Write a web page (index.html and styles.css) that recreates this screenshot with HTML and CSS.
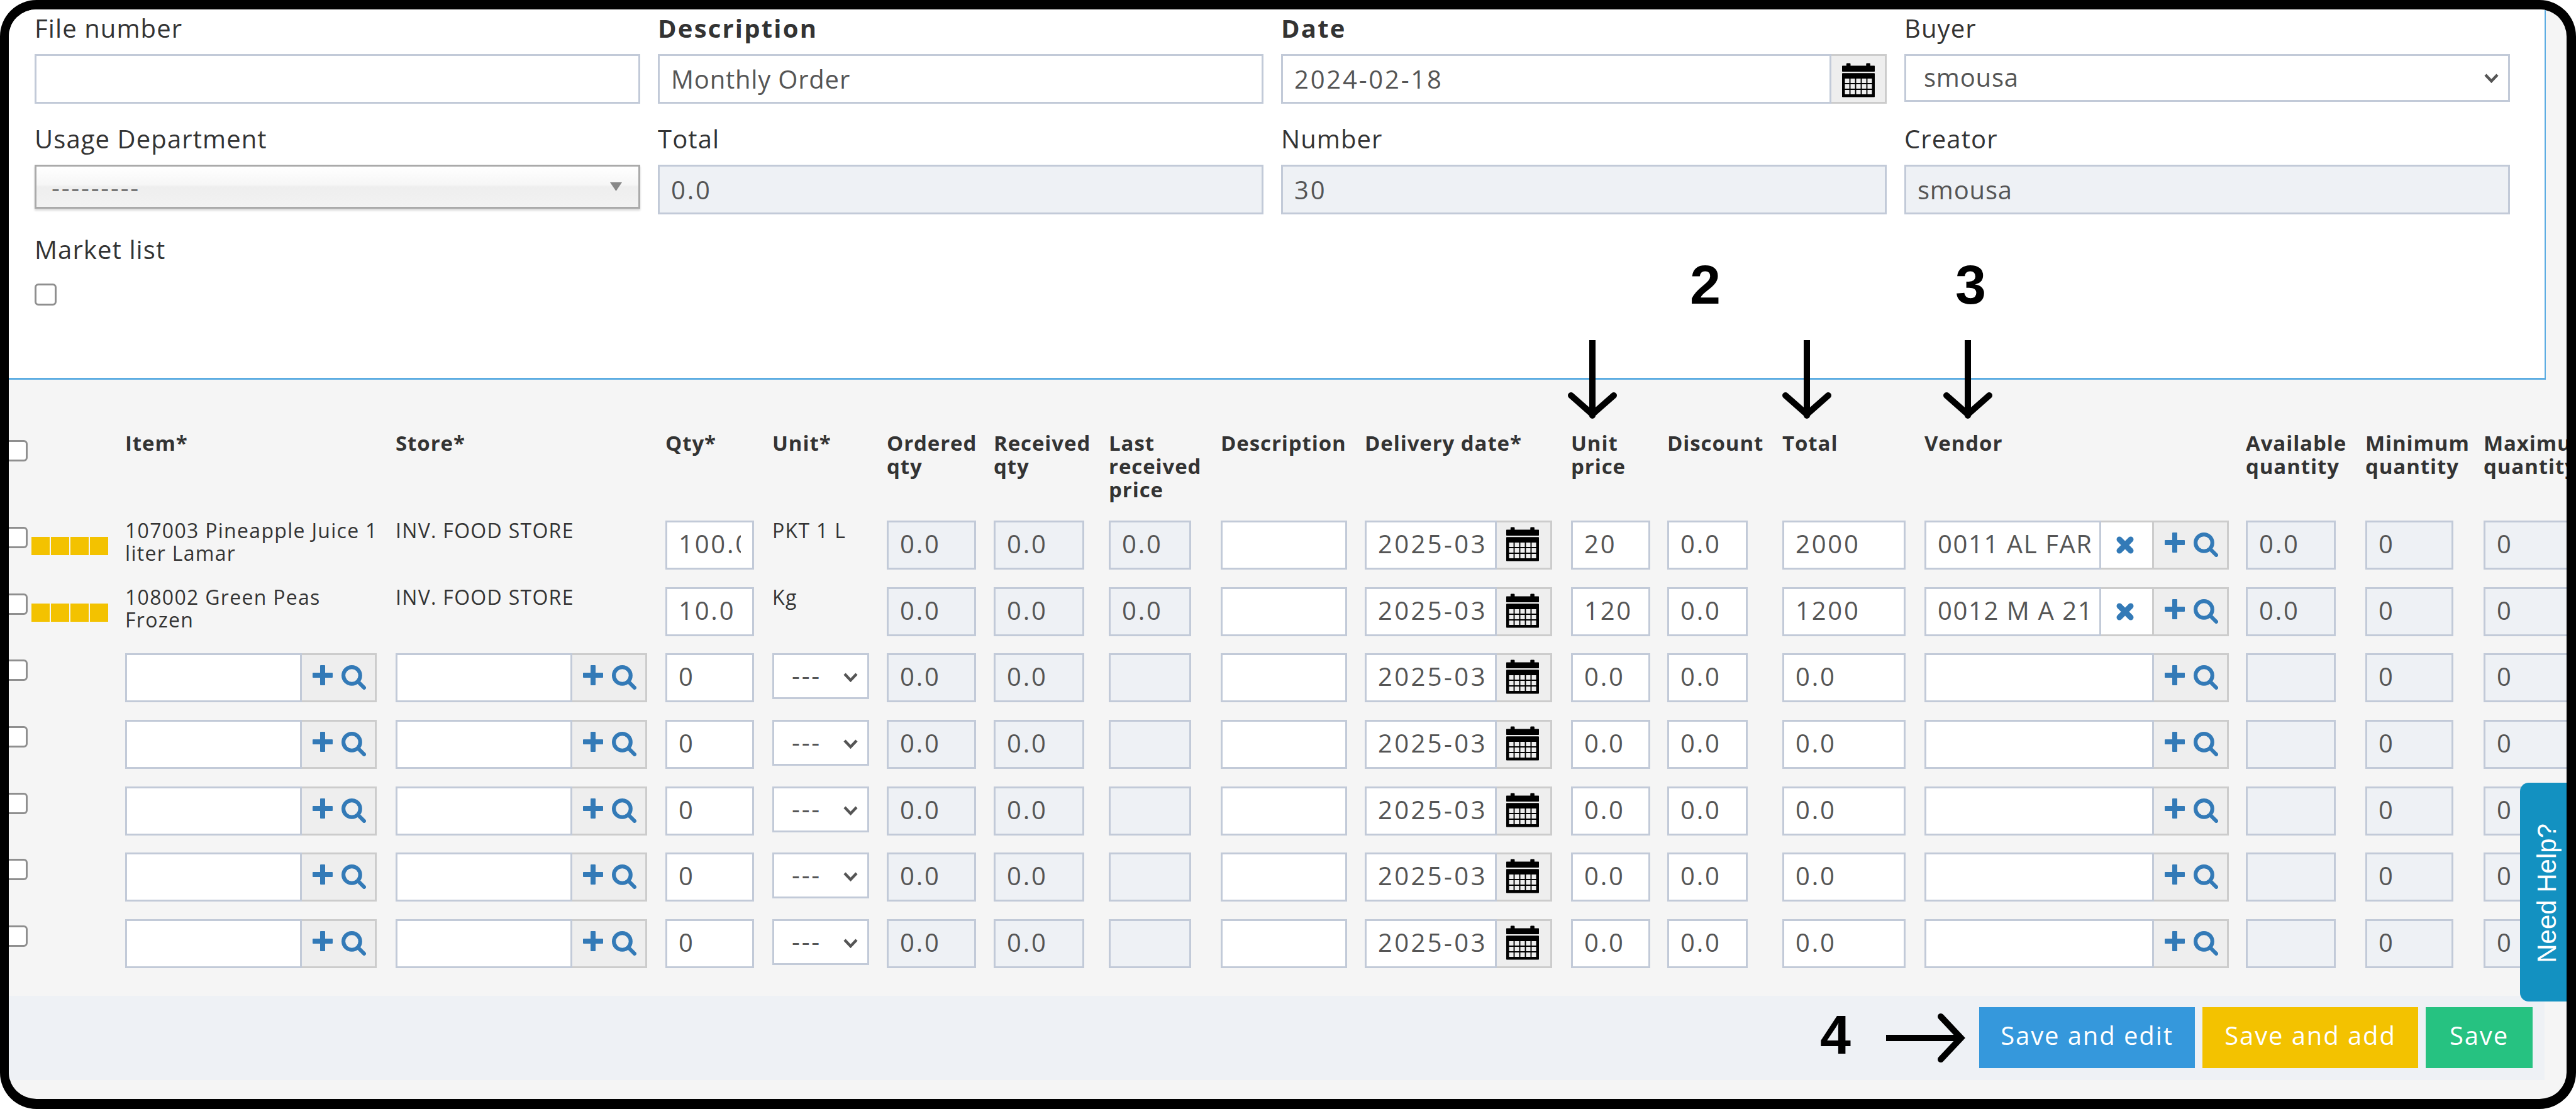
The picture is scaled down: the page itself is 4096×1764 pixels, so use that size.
FILE: index.html
```html
<!DOCTYPE html>
<html lang="en">
<head>
    <meta charset="UTF-8">
    <title>Purchase order</title>
    <link rel="stylesheet" href="styles.css">
</head>
<body>
    <svg class="defs">
        <symbol id="i-plus" viewBox="0 0 32 32"><path d="M12 1q0-1 1-1h6q1 0 1 1v11h11q1 0 1 1v6q0 1-1 1H20v11q0 1-1 1h-6q-1 0-1-1V20H1q-1 0-1-1v-6q0-1 1-1h11z"/></symbol>
        <symbol id="i-search" viewBox="0 0 38 38"><circle cx="16" cy="16" r="13" fill="none" stroke="currentColor" stroke-width="6"/><path d="M26 26l9 9" fill="none" stroke="currentColor" stroke-width="6" stroke-linecap="round"/></symbol>
        <symbol id="i-x" viewBox="0 0 28 28"><path d="M5 5l18 18M23 5L5 23" fill="none" stroke="currentColor" stroke-width="9" stroke-linecap="round"/></symbol>
        <symbol id="i-cal" viewBox="0 0 220 229">
            <rect x="29" y="0" width="28" height="30" rx="6" fill="#000"/>
            <rect x="162" y="0" width="28" height="30" rx="6" fill="#000"/>
            <rect x="0" y="17" width="220" height="40" rx="3" fill="#000"/>
            <rect x="0" y="67" width="220" height="162" rx="4" fill="#000"/>
            <path fill="#eee" d="M19 104h30v30H19zM57 104h30v30H57zM95 104h30v30H95zM133 104h30v30h-30zM171 104h30v30h-30zM19 142h30v30H19zM57 142h30v30H57zM95 142h30v30H95zM133 142h30v30h-30zM171 142h30v30h-30zM19 180h30v30H19zM57 180h30v30H57zM95 180h30v30H95zM133 180h30v30h-30zM171 180h30v30h-30z"/>
        </symbol>
        <symbol id="i-down" viewBox="0 0 90 135"><path d="M45 0V120M11 88L45 118L79 88" fill="none" stroke="#000" stroke-width="10" stroke-linecap="round"/></symbol>
    </svg>

    <div class="screen">
        <div class="panel">
            <div class="fields">
                <div class="field">
                    <label>File number</label>
                    <input class="box" type="text">
                </div>
                <div class="field">
                    <label class="strong">Description</label>
                    <input class="box alpha" type="text" value="Monthly Order">
                </div>
                <div class="field">
                    <label class="strong">Date</label>
                    <div class="group">
                        <input class="box" type="text" value="2024-02-18">
                        <span class="addon cal"><svg class="i-cal"><use href="#i-cal"/></svg></span>
                    </div>
                </div>
                <div class="field">
                    <label>Buyer</label>
                    <select class="pick buyer alpha"><option>smousa</option></select>
                </div>
                <div class="field">
                    <label>Usage Department</label>
                    <select class="usage"><option>---------</option></select>
                </div>
                <div class="field">
                    <label>Total</label>
                    <input class="box ro" type="text" value="0.0" readonly>
                </div>
                <div class="field">
                    <label>Number</label>
                    <input class="box ro" type="text" value="30" readonly>
                </div>
                <div class="field">
                    <label>Creator</label>
                    <input class="box ro alpha" type="text" value="smousa" readonly>
                </div>
                <div class="field">
                    <label>Market list</label>
                    <input class="tick market" type="checkbox">
                </div>
            </div>
        </div>

        <div class="head line">
            <input class="tick" type="checkbox">
            <span></span>
            <span>Item*</span>
            <span>Store*</span>
            <span>Qty*</span>
            <span>Unit*</span>
            <span>Ordered<br>qty</span>
            <span>Received<br>qty</span>
            <span>Last<br>received<br>price</span>
            <span>Description</span>
            <span>Delivery date*</span>
            <span>Unit<br>price</span>
            <span>Discount</span>
            <span>Total</span>
            <span>Vendor</span>
            <span>Available<br>quantity</span>
            <span>Minimum<br>quantity</span>
            <span>Maximum<br>quantity</span>
        </div>

        <div class="lines">
            <div class="line">
                <input class="tick" type="checkbox">
                <div class="bars"><i></i><i></i><i></i><i></i></div>
                <div class="txt">107003 Pineapple Juice 1 liter Lamar</div>
                <div class="txt">INV. FOOD STORE</div>
                <input class="box w-qty" type="text" value="100.0">
                <div class="txt">PKT 1 L</div>
                <input class="box ro w-ord" type="text" value="0.0" readonly>
                <input class="box ro w-rec" type="text" value="0.0" readonly>
                <input class="box ro w-last" type="text" value="0.0" readonly>
                <input class="box w-desc" type="text">
                <div class="group w-date"><input class="box" type="text" value="2025-03-10"><span class="addon cal"><svg class="i-cal"><use href="#i-cal"/></svg></span></div>
                <input class="box w-price" type="text" value="20">
                <input class="box w-disc" type="text" value="0.0">
                <input class="box w-total" type="text" value="2000">
                <div class="group w-vendor"><input class="box" type="text" value="0011 AL FARES"><span class="clear"><svg class="i-x"><use href="#i-x"/></svg></span><span class="addon find"><svg class="i-plus"><use href="#i-plus"/></svg><svg class="i-search"><use href="#i-search"/></svg></span></div>
                <input class="box ro w-avail" type="text" value="0.0" readonly>
                <input class="box ro w-min" type="text" value="0" readonly>
                <input class="box ro w-max" type="text" value="0" readonly>
            </div>
            <div class="line">
                <input class="tick" type="checkbox">
                <div class="bars"><i></i><i></i><i></i><i></i></div>
                <div class="txt">108002 Green Peas Frozen</div>
                <div class="txt">INV. FOOD STORE</div>
                <input class="box w-qty" type="text" value="10.0">
                <div class="txt">Kg</div>
                <input class="box ro w-ord" type="text" value="0.0" readonly>
                <input class="box ro w-rec" type="text" value="0.0" readonly>
                <input class="box ro w-last" type="text" value="0.0" readonly>
                <input class="box w-desc" type="text">
                <div class="group w-date"><input class="box" type="text" value="2025-03-10"><span class="addon cal"><svg class="i-cal"><use href="#i-cal"/></svg></span></div>
                <input class="box w-price" type="text" value="120">
                <input class="box w-disc" type="text" value="0.0">
                <input class="box w-total" type="text" value="1200">
                <div class="group w-vendor"><input class="box" type="text" value="0012 M A 21 TRADING"><span class="clear"><svg class="i-x"><use href="#i-x"/></svg></span><span class="addon find"><svg class="i-plus"><use href="#i-plus"/></svg><svg class="i-search"><use href="#i-search"/></svg></span></div>
                <input class="box ro w-avail" type="text" value="0.0" readonly>
                <input class="box ro w-min" type="text" value="0" readonly>
                <input class="box ro w-max" type="text" value="0" readonly>
            </div>
            <div class="line">
                <input class="tick" type="checkbox">
                <span></span>
                <div class="group w-item"><input class="box" type="text"><span class="addon find"><svg class="i-plus"><use href="#i-plus"/></svg><svg class="i-search"><use href="#i-search"/></svg></span></div>
                <div class="group w-item"><input class="box" type="text"><span class="addon find"><svg class="i-plus"><use href="#i-plus"/></svg><svg class="i-search"><use href="#i-search"/></svg></span></div>
                <input class="box w-qty" type="text" value="0">
                <select class="pick w-unit"><option>---</option></select>
                <input class="box ro w-ord" type="text" value="0.0" readonly>
                <input class="box ro w-rec" type="text" value="0.0" readonly>
                <input class="box ro w-last" type="text" readonly>
                <input class="box w-desc" type="text">
                <div class="group w-date"><input class="box" type="text" value="2025-03-10"><span class="addon cal"><svg class="i-cal"><use href="#i-cal"/></svg></span></div>
                <input class="box w-price" type="text" value="0.0">
                <input class="box w-disc" type="text" value="0.0">
                <input class="box w-total" type="text" value="0.0">
                <div class="group w-vendor"><input class="box" type="text"><span class="addon find"><svg class="i-plus"><use href="#i-plus"/></svg><svg class="i-search"><use href="#i-search"/></svg></span></div>
                <input class="box ro w-avail" type="text" readonly>
                <input class="box ro w-min" type="text" value="0" readonly>
                <input class="box ro w-max" type="text" value="0" readonly>
            </div>
            <div class="line">
                <input class="tick" type="checkbox">
                <span></span>
                <div class="group w-item"><input class="box" type="text"><span class="addon find"><svg class="i-plus"><use href="#i-plus"/></svg><svg class="i-search"><use href="#i-search"/></svg></span></div>
                <div class="group w-item"><input class="box" type="text"><span class="addon find"><svg class="i-plus"><use href="#i-plus"/></svg><svg class="i-search"><use href="#i-search"/></svg></span></div>
                <input class="box w-qty" type="text" value="0">
                <select class="pick w-unit"><option>---</option></select>
                <input class="box ro w-ord" type="text" value="0.0" readonly>
                <input class="box ro w-rec" type="text" value="0.0" readonly>
                <input class="box ro w-last" type="text" readonly>
                <input class="box w-desc" type="text">
                <div class="group w-date"><input class="box" type="text" value="2025-03-10"><span class="addon cal"><svg class="i-cal"><use href="#i-cal"/></svg></span></div>
                <input class="box w-price" type="text" value="0.0">
                <input class="box w-disc" type="text" value="0.0">
                <input class="box w-total" type="text" value="0.0">
                <div class="group w-vendor"><input class="box" type="text"><span class="addon find"><svg class="i-plus"><use href="#i-plus"/></svg><svg class="i-search"><use href="#i-search"/></svg></span></div>
                <input class="box ro w-avail" type="text" readonly>
                <input class="box ro w-min" type="text" value="0" readonly>
                <input class="box ro w-max" type="text" value="0" readonly>
            </div>
            <div class="line">
                <input class="tick" type="checkbox">
                <span></span>
                <div class="group w-item"><input class="box" type="text"><span class="addon find"><svg class="i-plus"><use href="#i-plus"/></svg><svg class="i-search"><use href="#i-search"/></svg></span></div>
                <div class="group w-item"><input class="box" type="text"><span class="addon find"><svg class="i-plus"><use href="#i-plus"/></svg><svg class="i-search"><use href="#i-search"/></svg></span></div>
                <input class="box w-qty" type="text" value="0">
                <select class="pick w-unit"><option>---</option></select>
                <input class="box ro w-ord" type="text" value="0.0" readonly>
                <input class="box ro w-rec" type="text" value="0.0" readonly>
                <input class="box ro w-last" type="text" readonly>
                <input class="box w-desc" type="text">
                <div class="group w-date"><input class="box" type="text" value="2025-03-10"><span class="addon cal"><svg class="i-cal"><use href="#i-cal"/></svg></span></div>
                <input class="box w-price" type="text" value="0.0">
                <input class="box w-disc" type="text" value="0.0">
                <input class="box w-total" type="text" value="0.0">
                <div class="group w-vendor"><input class="box" type="text"><span class="addon find"><svg class="i-plus"><use href="#i-plus"/></svg><svg class="i-search"><use href="#i-search"/></svg></span></div>
                <input class="box ro w-avail" type="text" readonly>
                <input class="box ro w-min" type="text" value="0" readonly>
                <input class="box ro w-max" type="text" value="0" readonly>
            </div>
            <div class="line">
                <input class="tick" type="checkbox">
                <span></span>
                <div class="group w-item"><input class="box" type="text"><span class="addon find"><svg class="i-plus"><use href="#i-plus"/></svg><svg class="i-search"><use href="#i-search"/></svg></span></div>
                <div class="group w-item"><input class="box" type="text"><span class="addon find"><svg class="i-plus"><use href="#i-plus"/></svg><svg class="i-search"><use href="#i-search"/></svg></span></div>
                <input class="box w-qty" type="text" value="0">
                <select class="pick w-unit"><option>---</option></select>
                <input class="box ro w-ord" type="text" value="0.0" readonly>
                <input class="box ro w-rec" type="text" value="0.0" readonly>
                <input class="box ro w-last" type="text" readonly>
                <input class="box w-desc" type="text">
                <div class="group w-date"><input class="box" type="text" value="2025-03-10"><span class="addon cal"><svg class="i-cal"><use href="#i-cal"/></svg></span></div>
                <input class="box w-price" type="text" value="0.0">
                <input class="box w-disc" type="text" value="0.0">
                <input class="box w-total" type="text" value="0.0">
                <div class="group w-vendor"><input class="box" type="text"><span class="addon find"><svg class="i-plus"><use href="#i-plus"/></svg><svg class="i-search"><use href="#i-search"/></svg></span></div>
                <input class="box ro w-avail" type="text" readonly>
                <input class="box ro w-min" type="text" value="0" readonly>
                <input class="box ro w-max" type="text" value="0" readonly>
            </div>
            <div class="line">
                <input class="tick" type="checkbox">
                <span></span>
                <div class="group w-item"><input class="box" type="text"><span class="addon find"><svg class="i-plus"><use href="#i-plus"/></svg><svg class="i-search"><use href="#i-search"/></svg></span></div>
                <div class="group w-item"><input class="box" type="text"><span class="addon find"><svg class="i-plus"><use href="#i-plus"/></svg><svg class="i-search"><use href="#i-search"/></svg></span></div>
                <input class="box w-qty" type="text" value="0">
                <select class="pick w-unit"><option>---</option></select>
                <input class="box ro w-ord" type="text" value="0.0" readonly>
                <input class="box ro w-rec" type="text" value="0.0" readonly>
                <input class="box ro w-last" type="text" readonly>
                <input class="box w-desc" type="text">
                <div class="group w-date"><input class="box" type="text" value="2025-03-10"><span class="addon cal"><svg class="i-cal"><use href="#i-cal"/></svg></span></div>
                <input class="box w-price" type="text" value="0.0">
                <input class="box w-disc" type="text" value="0.0">
                <input class="box w-total" type="text" value="0.0">
                <div class="group w-vendor"><input class="box" type="text"><span class="addon find"><svg class="i-plus"><use href="#i-plus"/></svg><svg class="i-search"><use href="#i-search"/></svg></span></div>
                <input class="box ro w-avail" type="text" readonly>
                <input class="box ro w-min" type="text" value="0" readonly>
                <input class="box ro w-max" type="text" value="0" readonly>
            </div>
        </div>

        <div class="actions">
            <button class="btn blue">Save and edit</button>
            <button class="btn yellow">Save and add</button>
            <button class="btn green">Save</button>
        </div>

        <!-- things drawn over the form -->
        <button class="help"><span>Need Help?</span></button>

        <span class="num num2">2</span>
        <span class="num num3">3</span>
        <span class="num num4">4</span>
        <svg class="arrow a1"><use href="#i-down"/></svg>
        <svg class="arrow a2"><use href="#i-down"/></svg>
        <svg class="arrow a3"><use href="#i-down"/></svg>
        <svg class="arrow-right" viewBox="0 0 140 80"><path d="M0 39H118M87 5L119 39L87 73" fill="none" stroke="#000" stroke-width="10" stroke-linecap="round"/></svg>
    </div>
</body>
</html>
```

FILE: styles.css
```css
* {
	box-sizing: border-box;
}

html, body {
	margin: 0;
	height: 100%;
	background: white;
}

body {
	font-family: "Open Sans", sans-serif;
	color: #333;
}

.defs {
	display: none;
}

.screen {
	position: relative;
	height: 100vh;
	overflow: hidden;
	background: #f5f5f5;
	border-style: solid;
	border-color: black;
	border-width: 15px 15px 16px 14px;
	border-radius: 58px;
}

/* top form */
.panel {
	width: 4034px;
	height: 589px;
	padding: 1px 0 0 41px;
	background: white;
	border-right: 2px solid #5dade2;
	border-bottom: 3px solid #5dade2;
}

.fields {
	display: grid;
	grid-template-columns: repeat(4, 963px);
	column-gap: 28px;
}

.field {
	height: 176px;
}

.field label {
	display: block;
	height: 70px;
	font-size: 40px;
	line-height: 57px;
	letter-spacing: 1.1px;
}

.field label.strong {
	font-weight: 700;
	letter-spacing: 2.2px;
}

.box {
	display: block;
	width: 100%;
	min-width: 0;
	height: 78px;
	padding: 0 18px 5px;
	border: 3px solid #c2cad8;
	border-radius: 0;
	outline: none;
	background: white;
	color: #555;
	font-family: "Open Sans", sans-serif;
	font-size: 40px;
	letter-spacing: 2.8px;
}

.fields .box {
	height: 79px;
	padding-bottom: 1px;
}

.fields .alpha {
	letter-spacing: 0.8px;
}

.ro {
	background: #eef1f5;
}

.group {
	display: flex;
	min-width: 0;
}

.group .box {
	flex: 1;
}

.w-date .box {
	letter-spacing: 3.4px;
	padding-right: 14px;
}

.w-vendor .box {
	letter-spacing: 1.6px;
	padding-right: 14px;
}

.addon {
	display: flex;
	flex: none;
	height: 78px;
	background: #eee;
	border: 3px solid #ccc;
	border-left: none;
}

.fields .addon {
	height: 79px;
}

.cal {
	width: 88px;
	padding: 7px 0 0 15px;
}

.fields .cal {
	padding: 11px 0 0 17px;
}

.find {
	width: 119px;
	padding: 16px 0 0 17px;
	gap: 14px;
	color: #337ab7;
}

.clear {
	flex: none;
	width: 84px;
	height: 78px;
	padding: 22px 0 0 24px;
	background: white;
	border: 3px solid #ccc;
	border-left: none;
	border-right: 3px solid #ccc;
	color: #337ab7;
}

.i-plus {
	width: 32px;
	height: 32px;
	fill: currentColor;
}

.i-search {
	width: 39px;
	height: 39px;
}

.i-x {
	display: block;
	width: 28px;
	height: 28px;
}

.i-cal {
	width: 52px;
	height: 55px;
}

select {
	appearance: none;
	-webkit-appearance: none;
	display: block;
	width: 100%;
	border-radius: 0;
	outline: none;
	font-family: "Open Sans", sans-serif;
	font-size: 40px;
	letter-spacing: 2.8px;
	color: #555;
}

.pick {
	height: 73px;
	padding: 0 0 4px 28px;
	border: 3px solid #c2cad8;
	background: white url("data:image/svg+xml,%3Csvg xmlns='http://www.w3.org/2000/svg' width='23' height='16'%3E%3Cpath d='M2 3l9.500 10L21 3' fill='none' stroke='%23555' stroke-width='4.500'/%3E%3C/svg%3E") no-repeat right 15px top 27px;
}

.buyer {
	height: 76px;
	letter-spacing: 2px;
}

.usage {
	height: 70px;
	padding: 0 0 0 24px;
	border: 3px solid #aaa;
	color: #777;
	box-shadow: 0 3px 3px rgba(0, 0, 0, 0.15);
	background: url("data:image/svg+xml,%3Csvg xmlns='http://www.w3.org/2000/svg' width='19' height='14'%3E%3Cpath d='M0 0h19L9.500 14z' fill='%23888'/%3E%3C/svg%3E") no-repeat right 26px top 25px, linear-gradient(#fff 0%, #f6f6f6 45%, #eee 50%, #f2f2f2 100%);
}

.tick {
	appearance: none;
	-webkit-appearance: none;
	display: block;
	width: 37px;
	height: 34px;
	margin: 10px 0 0;
	background: white;
	border: 3px solid #8f8f8f;
	border-radius: 6px;
}

.market {
	width: 35px;
	height: 35px;
	margin: 13px 0 0;
}

/* lines table */
.line {
	display: grid;
	grid-template-columns: 43px 149px 430px 429px 170px 182px 170px 183px 178px 229px 328px 153px 183px 226px 511px 190px 188px 180px;
	height: 78px;
}

.lines {
	display: flex;
	flex-direction: column;
	gap: 27.7px;
	margin-left: -7px;
}

.head {
	height: 224px;
	margin-left: -7px;
	padding-top: 82px;
	font-size: 33px;
	font-weight: 700;
	line-height: 37px;
	letter-spacing: 0.9px;
	white-space: nowrap;
}

.head .tick {
	margin-top: 14px;
}

.bars {
	display: flex;
	gap: 2px;
	padding-top: 26px;
}

.bars i {
	width: 29px;
	height: 29px;
	background: #f3c200;
}

.txt {
	width: 410px;
	margin-top: -2px;
	font-size: 32px;
	line-height: 36px;
	letter-spacing: 1.3px;
}

.w-item { width: 400px; }
.w-qty { width: 141px; }
.w-unit { width: 154px; }
.w-ord { width: 142px; }
.w-rec { width: 144px; }
.w-last { width: 131px; }
.w-desc { width: 201px; }
.w-date { width: 298px; }
.w-price { width: 126px; }
.w-disc { width: 128px; }
.w-total { width: 196px; }
.w-vendor { width: 484px; }
.w-avail { width: 143px; }
.w-min { width: 140px; }
.w-max { width: 140px; }

/* buttons */
.actions {
	display: flex;
	justify-content: flex-end;
	gap: 12px;
	width: 4032px;
	height: 134px;
	margin-top: 44px;
	padding: 18px 19px 0 0;
	background: #eef1f5;
}

.btn {
	height: 97px;
	padding: 0 0 8px;
	border: none;
	color: white;
	font-family: "Open Sans", sans-serif;
	font-size: 40px;
	letter-spacing: 1.9px;
}

.blue { width: 343px; background: #3598dc; }
.yellow { width: 343px; background: #f3c200; }
.green { width: 170px; background: #26c281; }

/* over the form */
.help {
	position: absolute;
	top: 1230px;
	left: 3993px;
	width: 90px;
	height: 348px;
	padding: 0 0 61px 20px;
	border: none;
	border-radius: 14px 0 0 14px;
	background: #1391c1;
	color: white;
	display: flex;
	align-items: flex-end;
}

.help span {
	writing-mode: vertical-rl;
	transform: rotate(180deg);
	font-family: "Liberation Sans", sans-serif;
	font-size: 42px;
	line-height: 46px;
	white-space: nowrap;
}

.num {
	position: absolute;
	font-family: "Liberation Sans", sans-serif;
	font-size: 88px;
	font-weight: 700;
	line-height: 88px;
	color: black;
}

.num2 { left: 2673px; top: 394px; }
.num3 { left: 3095px; top: 394px; }
.num4 { left: 2880px; top: 1587px; }

.arrow {
	position: absolute;
	top: 526px;
	width: 90px;
	height: 135px;
}

.a1 { left: 2473px; }
.a2 { left: 2814px; }
.a3 { left: 3070px; }

.arrow-right {
	position: absolute;
	left: 2985px;
	top: 1597px;
	width: 140px;
	height: 80px;
}
```
